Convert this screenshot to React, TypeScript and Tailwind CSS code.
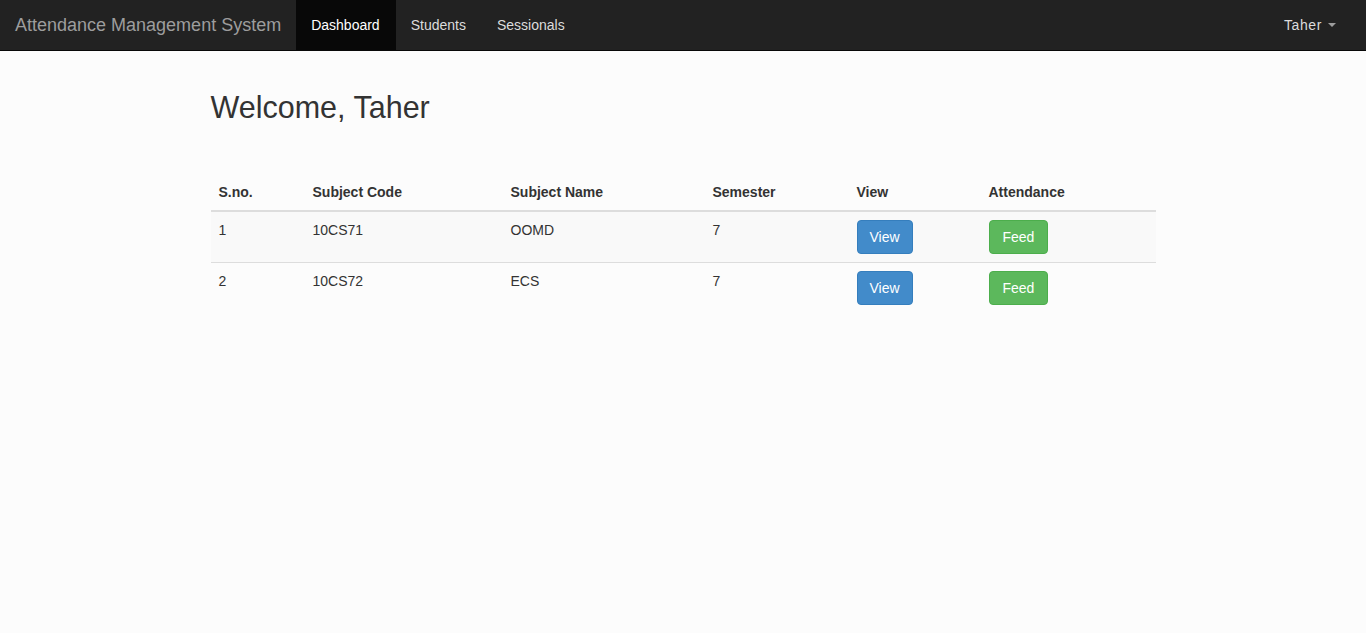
import React from "react";

const rows = [
  { n: "1", code: "10CS71", name: "OOMD", sem: "7" },
  { n: "2", code: "10CS72", name: "ECS", sem: "7" },
];

export default function App() {
  return (
    <div
      className="min-h-[633px] bg-[#fcfcfc] text-[14px] leading-[20px] text-[#333]"
      style={{ fontFamily: '"Liberation Sans", Arial, sans-serif' }}
    >
      <nav className="flex h-[51px] items-stretch border-b border-[#080808] bg-[#222]">
        <div className="flex items-center px-[15px] text-[18px] text-[#9d9d9d]">
          Attendance Management System
        </div>
        <a className="flex items-center bg-[#080808] pl-[15px] pr-[16px] text-white">Dashboard</a>
        <a className="flex items-center pl-[15px] pr-[16px] text-[#dcdcdc]">Students</a>
        <a className="flex items-center pl-[15px] pr-[16px] text-[#dcdcdc]">Sessionals</a>
        <div className="flex-1" />
        <a className="flex items-center pl-[15px] pr-[30px] text-[#dcdcdc] tracking-[0.6px]">
          Taher
          <span className="ml-[6px] inline-block h-0 w-0 border-x-[4px] border-t-[4px] border-x-transparent border-t-[#9d9d9d]" />
        </a>
      </nav>

      <div className="mx-auto w-[945px]">
        <h1 className="mb-[50px] mt-[40px] text-[30.5px] leading-[33px] text-[#333]">Welcome, Taher</h1>
        <table className="w-[945px] table-fixed border-collapse">
          <thead>
            <tr className="border-b-2 border-[#ddd]">
              <th className="w-[94px] p-[8px] text-left font-bold">S.no.</th>
              <th className="w-[198px] p-[8px] text-left font-bold">Subject Code</th>
              <th className="w-[202px] p-[8px] text-left font-bold">Subject Name</th>
              <th className="w-[144px] p-[8px] text-left font-bold">Semester</th>
              <th className="w-[132px] p-[8px] text-left font-bold">View</th>
              <th className="p-[8px] text-left font-bold">Attendance</th>
            </tr>
          </thead>
          <tbody>
            {rows.map((r, i) => (
              <tr
                key={r.n}
                className={
                  (i > 0 ? "border-t border-[#ddd] " : "") + (i % 2 === 0 ? "bg-[#f9f9f9]" : "")
                }
              >
                <td className="p-[8px] align-top">{r.n}</td>
                <td className="p-[8px] align-top">{r.code}</td>
                <td className="p-[8px] align-top">{r.name}</td>
                <td className="p-[8px] align-top">{r.sem}</td>
                <td className="p-[8px] align-top">
                  <button className="h-[34px] rounded-[4px] border border-[#357ebd] bg-[#428bca] px-[12px] text-white">
                    View
                  </button>
                </td>
                <td className="p-[8px] align-top">
                  <button className="h-[34px] rounded-[4px] border border-[#4cae4c] bg-[#5cb85c] px-[13px] text-white">
                    Feed
                  </button>
                </td>
              </tr>
            ))}
          </tbody>
        </table>
      </div>
    </div>
  );
}
